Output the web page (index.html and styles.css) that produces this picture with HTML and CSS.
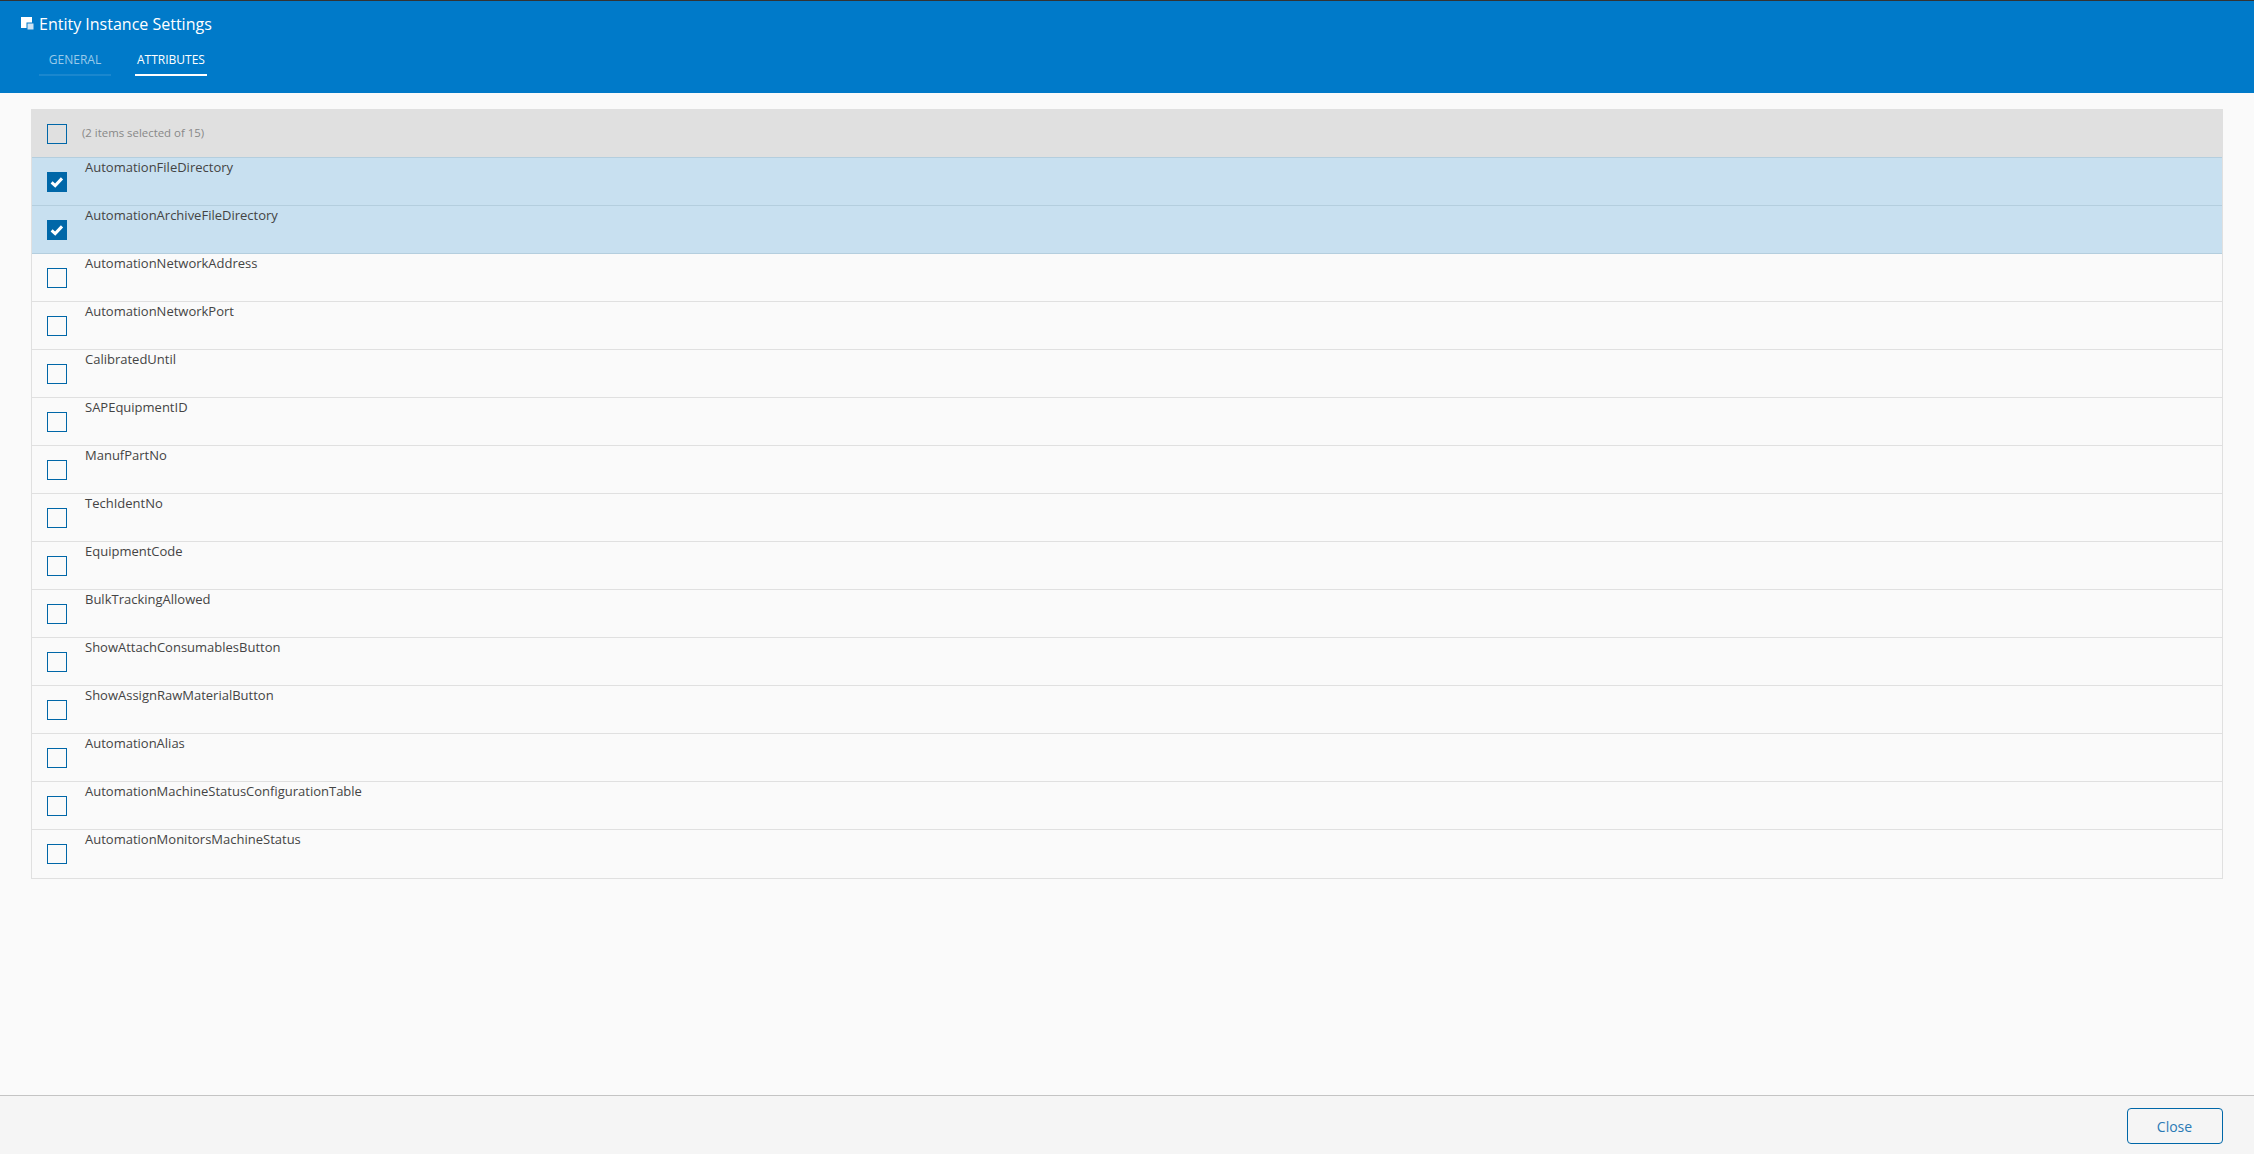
FILE: index.html
```html
<!DOCTYPE html>
<html lang="en">
<head>
    <meta charset="UTF-8">
    <meta name="viewport" content="width=device-width, initial-scale=1.0">
    <title>Entity Instance Settings</title>
    <link rel="stylesheet" href="styles.css">
</head>
<body>

<!-- Header -->
<div class="header">
    <div class="title-row">
        <svg class="title-icon" width="13" height="13" viewBox="0 0 13 13">
            <rect x="0" y="0" width="11" height="11" fill="#fff"/>
            <rect x="6" y="6" width="7" height="7" fill="#cfe4f4" stroke="#007ac9" stroke-width="1"/>
        </svg>
        <span class="title">Entity Instance Settings</span>
    </div>
    <div class="tabs">
        <div class="tab">GENERAL</div>
        <div class="tab active">ATTRIBUTES</div>
    </div>
</div>

<!-- Attribute list -->
<div class="content">
    <div class="list">
        <div class="list-head">
            <span class="check"></span>
            <span class="count">(2 items selected of 15)</span>
        </div>
        <div class="row selected">
            <span class="check checked"><svg width="20" height="20" viewBox="0 0 20 20"><path d="M4.6 10.4 L8.2 13.6 L15 6.4" fill="none" stroke="#fff" stroke-width="3"/></svg></span>
            <span class="name">AutomationFileDirectory</span>
        </div>
        <div class="row selected">
            <span class="check checked"><svg width="20" height="20" viewBox="0 0 20 20"><path d="M4.6 10.4 L8.2 13.6 L15 6.4" fill="none" stroke="#fff" stroke-width="3"/></svg></span>
            <span class="name">AutomationArchiveFileDirectory</span>
        </div>
        <div class="row"><span class="check"></span><span class="name">AutomationNetworkAddress</span></div>
        <div class="row"><span class="check"></span><span class="name">AutomationNetworkPort</span></div>
        <div class="row"><span class="check"></span><span class="name">CalibratedUntil</span></div>
        <div class="row"><span class="check"></span><span class="name">SAPEquipmentID</span></div>
        <div class="row"><span class="check"></span><span class="name">ManufPartNo</span></div>
        <div class="row"><span class="check"></span><span class="name">TechIdentNo</span></div>
        <div class="row"><span class="check"></span><span class="name">EquipmentCode</span></div>
        <div class="row"><span class="check"></span><span class="name">BulkTrackingAllowed</span></div>
        <div class="row"><span class="check"></span><span class="name">ShowAttachConsumablesButton</span></div>
        <div class="row"><span class="check"></span><span class="name">ShowAssignRawMaterialButton</span></div>
        <div class="row"><span class="check"></span><span class="name">AutomationAlias</span></div>
        <div class="row"><span class="check"></span><span class="name">AutomationMachineStatusConfigurationTable</span></div>
        <div class="row"><span class="check"></span><span class="name">AutomationMonitorsMachineStatus</span></div>
    </div>
</div>

<!-- Footer -->
<div class="footer">
    <button class="close-button">Close</button>
</div>

</body>
</html>
```

FILE: styles.css
```css
* {
    box-sizing: border-box;
}
body {
    display: flex;
    flex-direction: column;
    height: 100vh;
    margin: 0;
    overflow: hidden;
    background-color: #fafafa;
    font-family: "Open Sans", sans-serif;
    color: #444;
}
.header {
    height: 93px;
    flex: none;
    padding-left: 21px;
    background-color: #007ac9;
    border-top: 1px solid #333;
    color: #fff;
}
.title-row {
    display: flex;
    align-items: center;
    height: 48px;
    padding-bottom: 3px;
}
.title-icon {
    margin-right: 5px;
}
.title {
    font-size: 16px;
}
.tabs {
    display: flex;
    gap: 24px;
    margin-left: 18px;
}
.tab {
    width: 72px;
    height: 27px;
    padding-top: 2px;
    text-align: center;
    font-size: 12px;
    line-height: 17px;
    color: #99cae9;
    border-bottom: 2px solid #1a87ce;
}
.tab.active {
    color: #fff;
    border-bottom-color: #fff;
}
.content {
    flex: 1;
    padding: 16px 31px 0 31px;
}
.list {
    padding-bottom: 1px;
    border: 1px solid #e0e0e0;
    border-top: 0;
}
.list-head {
    display: flex;
    align-items: center;
    height: 48px;
    padding-left: 15px;
    background-color: #e0e0e0;
}
.list-head .check {
    margin-top: 2px;
}
.count {
    margin-left: 15px;
    padding-bottom: 2px;
    font-size: 11.4px;
    color: #888;
}
.row {
    display: flex;
    height: 48px;
    padding-left: 15px;
    border-top: 1px solid #e0e0e0;
}
.row.selected {
    background-color: #c8e0f0;
    border-top-color: #b4cede;
}
.row.selected + .row {
    border-top-color: #b4cede;
}
.check {
    flex: none;
    width: 20px;
    height: 20px;
    border: 1px solid #0067a8;
}
.row .check {
    margin-top: 14px;
}
.check.checked {
    background-color: #0067a8;
}
.check svg {
    display: block;
    margin: -1px;
}
.name {
    margin-left: 18px;
    font-size: 13px;
    line-height: 18px;
}
.footer {
    flex: none;
    display: flex;
    justify-content: flex-end;
    align-items: flex-start;
    height: 59px;
    padding: 12px 31px 0 0;
    background-color: #f5f5f5;
    border-top: 1px solid #c4c4c4;
}
.close-button {
    width: 96px;
    height: 36px;
    padding: 0 1px 0 0;
    background-color: transparent;
    border: 1px solid #0067a8;
    border-radius: 4px;
    font-family: "Open Sans", sans-serif;
    font-size: 14px;
    color: #2a7ab5;
}
```
